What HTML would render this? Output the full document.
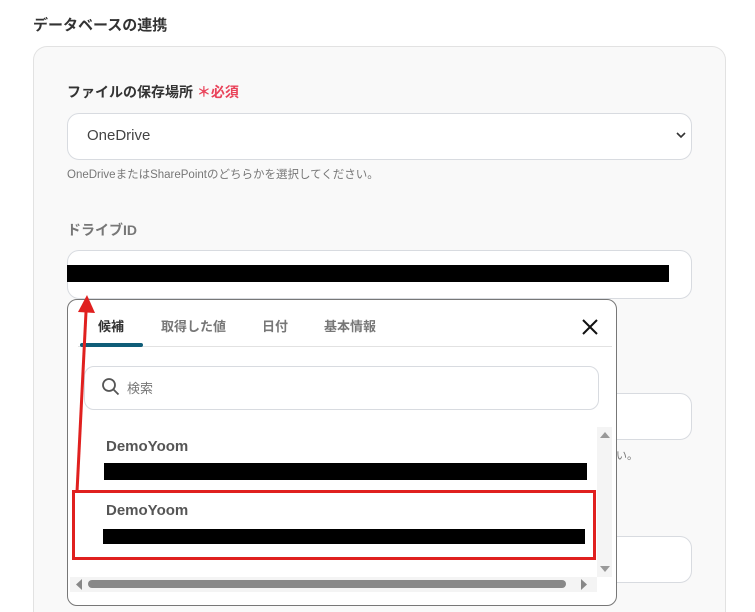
<!DOCTYPE html>
<html style="width:755px;height:612px;overflow:hidden"><head><meta charset="utf-8"><style>
*{box-sizing:border-box;margin:0;padding:0}
body{width:755px;height:612px;background:#fff;font-family:"Liberation Sans","Noto Sans CJK JP",sans-serif;position:relative;overflow:hidden;color:#333}
.abs{position:absolute}
.card{left:33px;top:46px;width:693px;height:566px;background:#f9f9f9;border:1px solid #e2e2e2;border-bottom:none;border-radius:14px 14px 0 0}
.inp{background:#fff;border:1px solid #d8dbe0;border-radius:12px}
.blk{background:#000}
</style></head><body>
<div class="abs" style="left:33px;top:14px;font-size:15px;font-weight:bold;color:#333">データベースの連携</div>
<div class="abs card"></div>
<div class="abs" style="left:67px;top:82px;font-size:14px;font-weight:bold;color:#333">ファイルの保存場所 <span style="color:#e9435a">＊必須</span></div>
<div class="abs inp" style="left:67px;top:113px;width:625px;height:47px"></div>
<div class="abs" style="left:87px;top:127px;font-size:15px;color:#444">OneDrive</div>
<svg class="abs" style="left:676px;top:131px" width="10" height="8"><path d="M1 2l4 4 4-4" stroke="#333" stroke-width="1.6" fill="none"/></svg>
<div class="abs" style="left:67px;top:166px;font-size:11.5px;color:#777">OneDriveまたはSharePointのどちらかを選択してください。</div>
<div class="abs" style="left:67px;top:220px;font-size:14px;font-weight:bold;color:#777">ドライブID</div>
<div class="abs inp" style="left:67px;top:250px;width:625px;height:49px"></div>
<div class="abs blk" style="left:67px;top:265px;width:602px;height:17px"></div>
<div class="abs inp" style="left:600px;top:393px;width:92px;height:47px"></div>
<div class="abs" style="left:616px;top:447px;font-size:11px;color:#777">い。</div>
<div class="abs inp" style="left:600px;top:536px;width:92px;height:47px"></div>

<div class="abs" style="left:67px;top:299px;width:550px;height:307px;background:#fff;border:1px solid #777;border-radius:10px"></div>
<div class="abs" style="left:98px;top:316px;font-size:13px;font-weight:bold;color:#333">候補</div>
<div class="abs" style="left:161px;top:316px;font-size:13px;font-weight:bold;color:#777">取得した値</div>
<div class="abs" style="left:262px;top:316px;font-size:13px;font-weight:bold;color:#777">日付</div>
<div class="abs" style="left:324px;top:316px;font-size:13px;font-weight:bold;color:#777">基本情報</div>
<svg class="abs" style="left:581px;top:318px" width="18" height="18"><path d="M2 2l14 14M16 2L2 16" stroke="#111" stroke-width="2"/></svg>
<div class="abs" style="left:78px;top:346px;width:534px;height:1px;background:#e2e2e2"></div>
<div class="abs" style="left:80px;top:343px;width:63px;height:4px;background:#0f5d78;border-radius:2px"></div>
<div class="abs inp" style="left:84px;top:366px;width:515px;height:44px;border-radius:10px"></div>
<svg class="abs" style="left:101px;top:377px" width="20" height="20"><circle cx="8" cy="8" r="6" stroke="#555" stroke-width="1.8" fill="none"/><path d="M12.5 12.5l5 5" stroke="#555" stroke-width="1.8"/></svg>
<div class="abs" style="left:127px;top:378px;font-size:13px;color:#777">検索</div>
<div class="abs" style="left:106px;top:438px;font-size:15px;font-weight:bold;color:#555">DemoYoom</div>
<div class="abs blk" style="left:104px;top:463px;width:483px;height:17px"></div>
<div class="abs" style="left:106px;top:502px;font-size:15px;font-weight:bold;color:#555">DemoYoom</div>
<div class="abs blk" style="left:103px;top:529px;width:482px;height:15px"></div>
<div class="abs" style="left:72px;top:490px;width:524px;height:70px;border:3px solid #e0201f"></div>
<div class="abs" style="left:597px;top:427px;width:15px;height:150px;background:#f4f4f4"></div>
<svg class="abs" style="left:599px;top:430px" width="12" height="146"><path d="M1 8l5-6 5 6z" fill="#999"/><path d="M1 136l5 6 5-6z" fill="#999"/></svg>
<div class="abs" style="left:70px;top:577px;width:527px;height:15px;background:#f4f4f4"></div>
<svg class="abs" style="left:74px;top:578px" width="520" height="13"><path d="M8 1l-6 5.5 6 5.5z" fill="#888"/><path d="M507 1l6 5.5-6 5.5z" fill="#888"/></svg>
<div class="abs" style="left:88px;top:580px;width:478px;height:8px;background:#888;border-radius:4px"></div>

<svg class="abs" style="left:0;top:0" width="755" height="612"><path d="M77 492L86 312" stroke="#e0201f" stroke-width="3"/><path d="M78 312l9-17 8 18z" fill="#e0201f"/></svg>
</body></html>
